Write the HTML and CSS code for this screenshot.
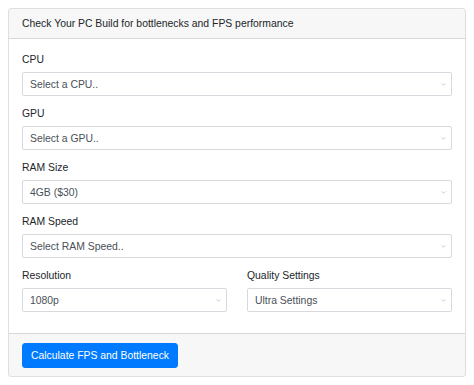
FILE: index.html
```html
<!DOCTYPE html>
<html>
<head>
<meta charset="utf-8">
<link rel="stylesheet" href="styles.css">
</head>
<body>
<div class="card">
  <div class="card-header">Check Your PC Build for bottlenecks and FPS performance</div>
  <div class="card-body">
    <div class="form-group">
      <label class="lbl">CPU</label>
      <div class="sel"><span>Select a CPU..</span><svg class="chev" viewBox="0 0 6 4" width="5" height="3"><path d="M0.5 0.5 L3 3 L5.5 0.5" fill="none" stroke="#b5b5b5" stroke-width="1"/></svg></div>
    </div>
    <div class="form-group">
      <label class="lbl">GPU</label>
      <div class="sel"><span>Select a GPU..</span><svg class="chev" viewBox="0 0 6 4" width="5" height="3"><path d="M0.5 0.5 L3 3 L5.5 0.5" fill="none" stroke="#b5b5b5" stroke-width="1"/></svg></div>
    </div>
    <div class="form-group">
      <label class="lbl">RAM Size</label>
      <div class="sel"><span>4GB ($30)</span><svg class="chev" viewBox="0 0 6 4" width="5" height="3"><path d="M0.5 0.5 L3 3 L5.5 0.5" fill="none" stroke="#b5b5b5" stroke-width="1"/></svg></div>
    </div>
    <div class="form-group">
      <label class="lbl">RAM Speed</label>
      <div class="sel"><span>Select RAM Speed..</span><svg class="chev" viewBox="0 0 6 4" width="5" height="3"><path d="M0.5 0.5 L3 3 L5.5 0.5" fill="none" stroke="#b5b5b5" stroke-width="1"/></svg></div>
    </div>
    <div class="row">
      <div class="form-group col">
        <label class="lbl">Resolution</label>
        <div class="sel"><span>1080p</span><svg class="chev" viewBox="0 0 6 4" width="5" height="3"><path d="M0.5 0.5 L3 3 L5.5 0.5" fill="none" stroke="#b5b5b5" stroke-width="1"/></svg></div>
      </div>
      <div class="form-group col">
        <label class="lbl">Quality Settings</label>
        <div class="sel"><span>Ultra Settings</span><svg class="chev" viewBox="0 0 6 4" width="5" height="3"><path d="M0.5 0.5 L3 3 L5.5 0.5" fill="none" stroke="#b5b5b5" stroke-width="1"/></svg></div>
      </div>
    </div>
  </div>
  <div class="card-footer">
    <button class="btn">Calculate FPS and Bottleneck</button>
  </div>
</div>
</body>
</html>
```

FILE: styles.css
```css
body {
  margin: 8px;
  font-family: "Liberation Sans", Arial, sans-serif;
  font-size: 10.4px;
  line-height: 15px;
  color: #212529;
  background: #fff;
}
.card {
  border: 1px solid rgba(0,0,0,.125);
  border-radius: 3px;
  display: flex;
  flex-direction: column;
  overflow: hidden;
}
.card-header {
  background: rgba(0,0,0,.03);
  border-bottom: 1px solid rgba(0,0,0,.125);
  padding: 7px 13px;
  height: 15px;
  box-sizing: content-box;
}
.card-body {
  padding: 13px 13px 1px;
}
.form-group {
  margin-bottom: 10px;
}
.row {
  display: flex;
  margin: 0 -10px 10px;
}
.lbl {
  display: block;
  height: 15px;
  margin-bottom: 5px;
}
.sel {
  position: relative;
  height: 24px;
  box-sizing: border-box;
  border: 1px solid #d6dadf;
  border-radius: 2px;
  padding: 0 8px 0 7px;
  display: flex;
  align-items: center;
  color: #495057;
  background: #fff;
}
.chev {
  position: absolute;
  right: 5px;
  top: 50%;
  margin-top: -1px;
}
.col {
  flex: 1 1 0;
  padding: 0 10px;
}
.card-footer {
  background: rgba(0,0,0,.03);
  border-top: 1px solid rgba(0,0,0,.125);
  padding: 9px 13px 8px;
}
.btn {
  font-family: inherit;
  font-size: 10.4px;
  line-height: 15px;
  height: 25px;
  box-sizing: border-box;
  color: #fff;
  background: #007bff;
  border: 1px solid #007bff;
  border-radius: 3px;
  padding: 4px 8px;
  display: block;
}
```
